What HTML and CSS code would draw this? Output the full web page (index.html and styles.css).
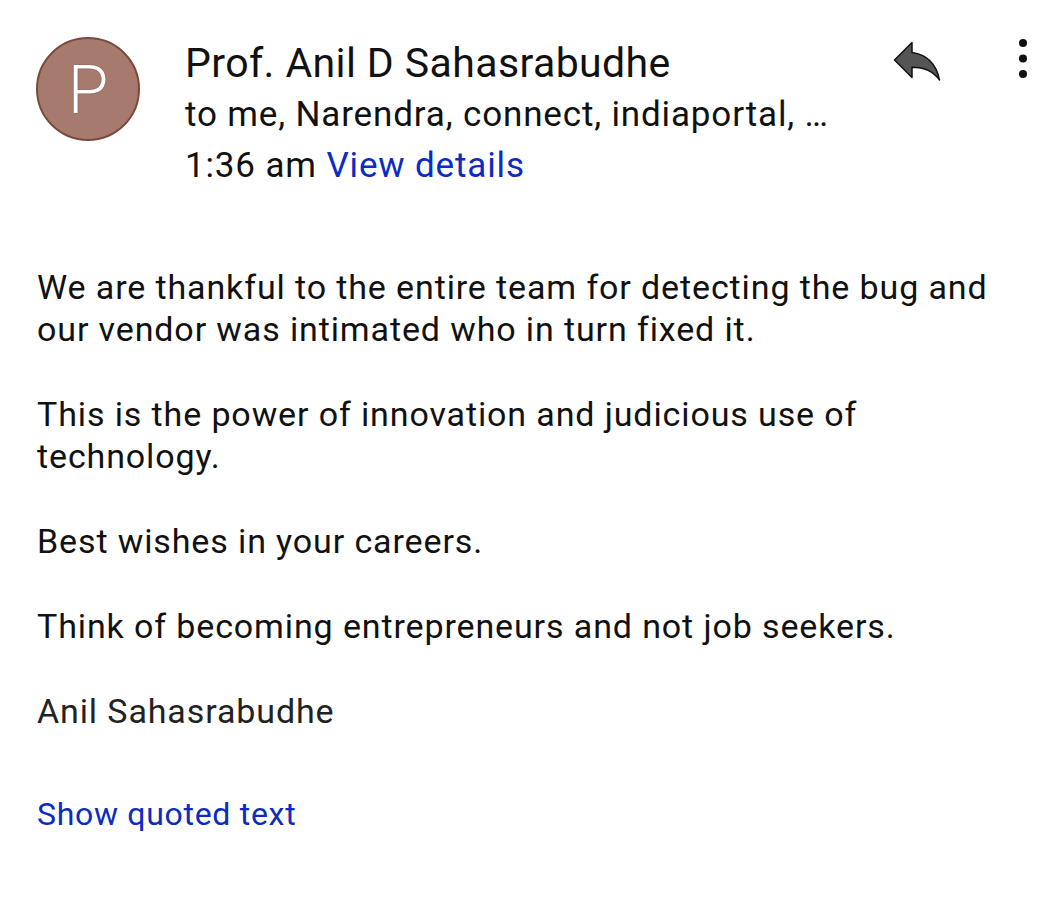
FILE: index.html
```html
<!DOCTYPE html>
<html>
<head>
<meta charset="utf-8">
<link rel="stylesheet" href="styles.css">
</head>
<body>
<div class="mail">
  <div class="header">
    <div class="avatar"><span>P</span></div>
    <div class="meta">
      <div class="sender">Prof. Anil D Sahasrabudhe</div>
      <div class="recipients">to me, Narendra, connect, indiaportal, …</div>
      <div class="time">1:36 am <span class="link">View details</span></div>
    </div>
    <div class="actions">
      <svg class="reply" viewBox="0 0 24 24" width="60" height="60"><path d="M10 9V5l-7 7 7 7v-4.1c5 0 8.5 1.6 11 5.1-1-5-4-10-11-11z" fill="#555" stroke="#111" stroke-width="0.6" stroke-linejoin="round"/></svg>
      <svg class="more" viewBox="0 0 12 40" width="12" height="40"><circle cx="6" cy="5" r="4" fill="#111"/><circle cx="6" cy="20.5" r="4" fill="#111"/><circle cx="6" cy="36" r="4" fill="#111"/></svg>
    </div>
  </div>
  <div class="body">
    <p>We are thankful to the entire team for detecting the bug and our vendor was intimated who in turn fixed it.</p>
    <p>This is the power of innovation and judicious use of technology.</p>
    <p>Best wishes in your careers.</p>
    <p>Think of becoming entrepreneurs and not job seekers.</p>
    <p class="sig">Anil Sahasrabudhe</p>
    <p class="quoted link">Show quoted text</p>
  </div>
</div>
</body>
</html>
```
FILE: styles.css
```css
html, body {
  margin: 0;
  padding: 0;
  background: #fff;
}
body {
  font-family: Roboto, "Liberation Sans", sans-serif;
  color: #111;
}
.mail {
  width: 1064px;
}
.header {
  display: flex;
  align-items: flex-start;
  padding: 37px 0 0 36px;
}
.avatar {
  width: 100px;
  height: 100px;
  border-radius: 50%;
  background: #a67b6d;
  border: 2px solid #7a4a3e;
  display: flex;
  align-items: center;
  justify-content: center;
  flex: none;
}
.avatar span {
  color: #fff;
  font-size: 66px;
  font-weight: 300;
  line-height: 1;
  margin-top: 3px;
  text-shadow: 0 0 1px #3a2018;
}
.meta {
  margin-left: 45px;
  flex: 1;
}
.sender {
  font-size: 41px;
  line-height: 52px;
  letter-spacing: 0.4px;
}
.recipients,
.time {
  font-size: 35px;
  line-height: 51px;
  letter-spacing: 0.85px;
}
.link {
  color: #0b2bc2;
}
.actions {
  display: flex;
  align-items: flex-start;
  gap: 70px;
  margin-right: 35px;
  margin-top: -7px;
}
.more {
  margin-top: 8px;
}
.body {
  padding: 0 0 0 37px;
  margin-top: 75px;
  font-size: 34px;
  line-height: 42px;
  letter-spacing: 0.88px;
  width: 985px;
}
.body p {
  margin: 0 0 43px 0;
}
.sig {
  color: #222;
}
.body .quoted {
  margin-top: 61px;
  font-size: 32px;
  letter-spacing: 0.7px;
}
```
